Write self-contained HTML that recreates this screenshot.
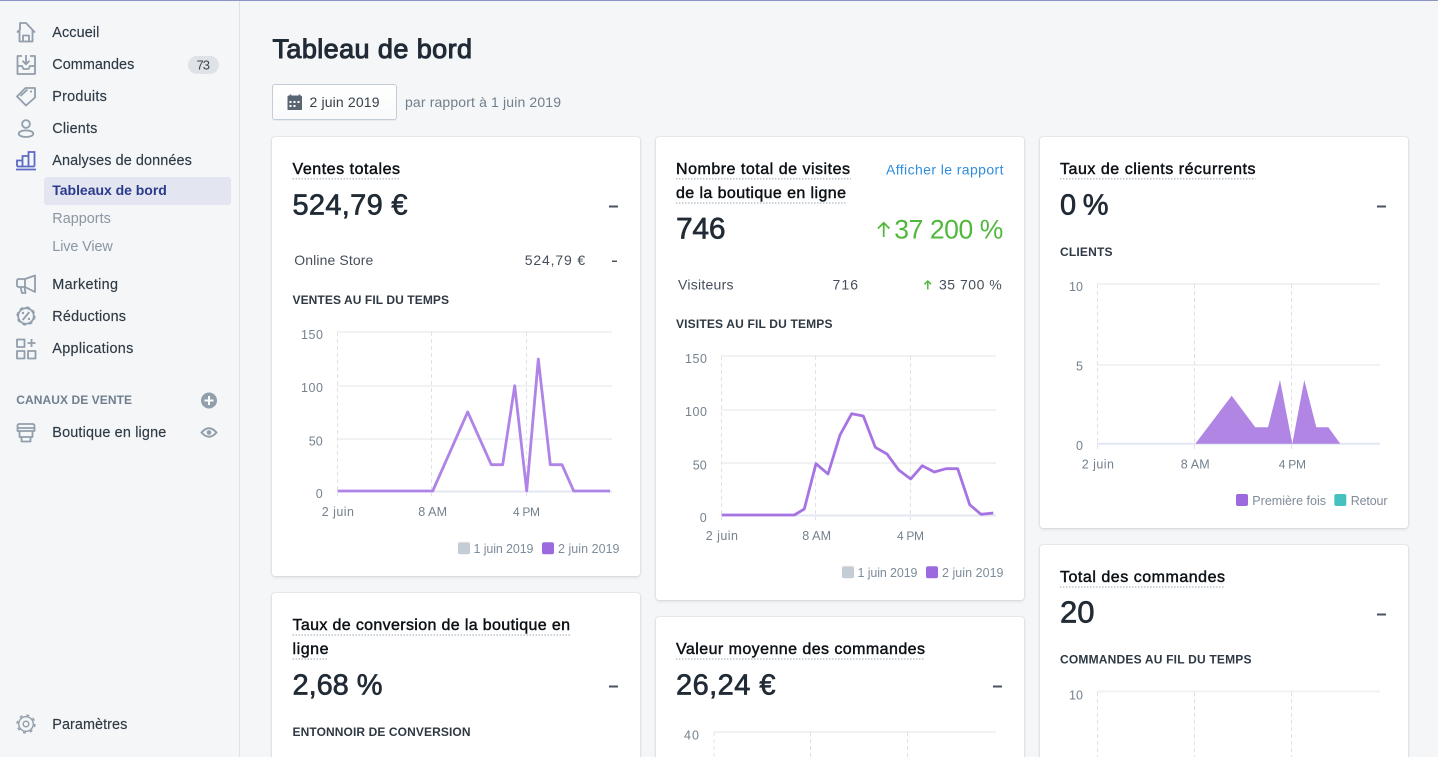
<!DOCTYPE html>
<html lang="fr">
<head>
<meta charset="utf-8">
<title>Tableau de bord</title>
<style>
html,body{margin:0;padding:0;width:1438px;height:757px;overflow:hidden;background:#f4f6f8}
body{position:relative;font-family:"Liberation Sans",sans-serif}
.top{position:absolute;left:0;top:0;width:1438px;height:1px;background:#8f94c6}
.side{position:absolute;left:0;top:0;width:239px;height:757px;border-right:1px solid #dfe3e8;background:#f4f6f8}
.sel{position:absolute;left:44px;top:177px;width:187px;height:28px;background:#e3e5f0;border-radius:3px}
.badge{position:absolute;left:188px;top:56px;width:31px;height:18px;border-radius:9px;background:#dfe3e8}
.btn{position:absolute;left:272px;top:84px;width:123px;height:34px;border:1px solid #c4cdd5;border-radius:3px;background:linear-gradient(#fff,#f9fafb);box-shadow:0 1px 0 rgba(22,29,37,.05)}
.card{position:absolute;width:368px;background:#fff;border-radius:3px;box-shadow:0 0 0 1px rgba(63,63,68,.05),0 1px 3px 0 rgba(63,63,68,.15)}
svg{position:absolute;left:0;top:0}
text{font-family:"Liberation Sans",sans-serif;white-space:pre}
.n{font-size:14.4px;fill:#2f3a45;stroke:#2f3a45;stroke-width:.15}
.s{font-size:14.4px;fill:#8a96a3}
.ti{font-size:16px;fill:#0c1116;stroke:#0c1116;stroke-width:.45;transform:translateY(-.5px)}
.v{font-size:29px;fill:#212b36;stroke:#212b36;stroke-width:.65;transform:translateY(-.5px)}
.r{font-size:14px;fill:#454f5b;transform:translateY(-.5px)}
.h{font-size:12px;font-weight:bold;fill:#2e3944;transform:translateY(-1px)}
.l{font-size:12.5px;fill:#74818e;transform:translateY(-.5px)}
.lg{font-size:12.5px;fill:#7f8c99}
.i{fill:none;stroke:#919eab;stroke-width:1.8;stroke-linejoin:round}
.gr{stroke:#f1f2f4;stroke-width:2}
.ax{stroke:#e3e7f3;stroke-width:2}
.da{stroke:#dfe3e8;stroke-width:1;stroke-dasharray:4 3}
.u{stroke:#b9c3ce;stroke-width:1.5;stroke-dasharray:1.5 1.5}
.d{fill:#4b5560}
</style>
</head>
<body>
<div class="side"></div>
<div class="top"></div>
<div class="sel"></div>
<div class="badge"></div>
<div class="btn"></div>
<div class="card" style="left:272px;top:137px;height:439px"></div>
<div class="card" style="left:272px;top:593px;height:180px"></div>
<div class="card" style="left:656px;top:137px;height:463px"></div>
<div class="card" style="left:656px;top:617px;height:160px"></div>
<div class="card" style="left:1040px;top:137px;height:391px"></div>
<div class="card" style="left:1040px;top:545px;height:230px"></div>

<svg width="1438" height="757" viewBox="0 0 1438 757" xmlns="http://www.w3.org/2000/svg">
<!-- sidebar icons -->
<path class="i" d="M17 32.500l3-3V23h6l9 9.500M19.500 31v10.500h13V30M23 41.500v-6h6v6"/>
<path class="i" d="M22 56h-4.500v18h17.500V56h-5M17.500 66h4.500l1.500 3h5l1.500-3h5M26 55v9M22.500 60.800l3.500 3.500 3.500-3.500"/>
<path class="i" d="M25.500 88H35v9.500L26 105.500 17 96.500zM20.500 96l7-6.500"/>
<circle cx="31" cy="91.500" r="1.100" fill="#919eab"/>
<circle class="i" cx="26" cy="124" r="3.900"/>
<ellipse class="i" cx="26" cy="133.700" rx="7.300" ry="3.300"/>
<path d="M17 166.500v-6h5.500M22.500 166.500v-10.500h6v10.500M28.500 166.500V152h6v14.500M17 166.500h17.500" fill="none" stroke="#5c6ac4" stroke-width="1.800"/>
<path d="M16 169.500h20" stroke="#5c6ac4" stroke-width="1.800"/>
<path class="i" d="M35 275.500V292l-10-5h-6q-2 0-2-2v-4q0-2 2-2h6zM25 279v8M20.500 287l1.500 6h3.500l-1-6"/>
<circle class="i" cx="26" cy="316" r="7.800"/>
<circle cx="26" cy="316" r="8.800" fill="none" stroke="#919eab" stroke-width="1.600" stroke-dasharray="3.500 3.410"/>
<path class="i" d="M22.700 320l6.600-8" stroke-width="1.500"/>
<circle cx="23" cy="313" r="1.200" fill="#919eab"/><circle cx="29" cy="319" r="1.200" fill="#919eab"/>
<path class="i" d="M17 339.500h7.500v7.500H17zM17 351h7.500v7.500H17zM28 351h7.500v7.500H28zM31.500 339v8M27.500 343h8"/>
<path class="i" d="M17.500 431v-5q0-2 2-2h13q2 0 2 2v5zM17.500 428h17M19.500 431v6h13v-6M21.500 437v4.500h9V437"/>
<circle cx="26" cy="724" r="7.300" fill="none" stroke="#919eab" stroke-width="1.400"/>
<circle cx="26" cy="724" r="8.900" fill="none" stroke="#919eab" stroke-width="1.500" stroke-dasharray="3 4"/>
<circle cx="26" cy="724" r="2.800" fill="none" stroke="#919eab" stroke-width="1.500"/>
<circle cx="209" cy="400.500" r="8" fill="#919eab"/>
<path d="M209 396v9M204.500 400.500h9" stroke="#fff" stroke-width="2"/>
<path d="M201.500 432.500q7.500-8.500 15 0q-7.500 8.500-15 0z" fill="none" stroke="#919eab" stroke-width="1.900"/>
<circle cx="209" cy="432.500" r="2.300" fill="#919eab"/>

<!-- sidebar text -->
<text class="n" x="52.300" y="37" textLength="47">Accueil</text>
<text class="n" x="52.300" y="69" textLength="82">Commandes</text>
<text x="196.500" y="69.500" font-size="13" fill="#3c4650" textLength="13.500">73</text>
<text class="n" x="52.300" y="101" textLength="54.500">Produits</text>
<text class="n" x="52.300" y="133" textLength="45">Clients</text>
<text class="n" x="52.300" y="165" textLength="139.500">Analyses de données</text>
<text x="52.300" y="195" font-size="14" font-weight="bold" fill="#2b3a8c" textLength="114.500">Tableaux de bord</text>
<text class="s" x="52.300" y="223" textLength="58.500">Rapports</text>
<text class="s" x="52.300" y="251" textLength="60.500">Live View</text>
<text class="n" x="52.300" y="289" textLength="65.700">Marketing</text>
<text class="n" x="52.300" y="321" textLength="73.700">Réductions</text>
<text class="n" x="52.300" y="353" textLength="81">Applications</text>
<text x="16.300" y="404" font-size="12" font-weight="bold" fill="#6f7f8e" textLength="115.700">CANAUX DE VENTE</text>
<text class="n" x="52.300" y="437" textLength="114">Boutique en ligne</text>
<text class="n" x="52.300" y="729" textLength="75">Paramètres</text>

<!-- header -->
<text x="272.500" y="58" font-size="27" fill="#212b36" stroke="#212b36" stroke-width="1" textLength="199.500">Tableau de bord</text>
<path d="M287.500 97q0-1.500 1.500-1.500h11q2 0 2 1.500v12.500q0 .5-.5.5h-13.500q-.5 0-.5-.5z" fill="#5a6572"/>
<path d="M290.500 94.500v2M299.500 94.500v2" stroke="#5a6572" stroke-width="1.600"/>
<path d="M289.500 101h2v2h-2zM293.500 101h2v2h-2zM297.500 101h2v2h-2zM289.500 105h2v2h-2zM293.500 105h2v2h-2z" fill="#fff"/>
<text x="309.500" y="107" font-size="14" fill="#36404a" textLength="70">2 juin 2019</text>
<text x="405" y="107" font-size="14" fill="#717e8b" textLength="156">par rapport à 1 juin 2019</text>

<!-- card 1 -->
<text class="ti" x="292.500" y="174.300" textLength="107.500">Ventes totales</text>
<path class="u" d="M292.500 178.800H400"/>
<text class="v" x="292.500" y="215" textLength="115">524,79 €</text>
<rect class="d" x="609" y="205.500" width="9" height="2"/>
<text class="r" x="294.300" y="265.700" textLength="79">Online Store</text>
<text class="r" x="524.700" y="265.700" textLength="60.500">524,79 €</text>
<rect class="d" x="612" y="260.500" width="5" height="1.500"/>
<text class="h" x="292.500" y="305" textLength="156.500">VENTES AU FIL DU TEMPS</text>
<g>
<path class="gr" d="M337 332H612M337 386H612M337 439H612"/>
<path class="da" d="M337.500 332V496M431.500 332V496M526.500 332V496"/>
<path class="ax" d="M337 491.500H612"/>
<path d="M337.700 491H432.700L467.700 412L491.300 464.700H502.700L514.700 385.700L526.700 491L538.300 359L550.300 464.700H562L573.700 491H610" fill="none" stroke="#b083e6" stroke-width="2.800" stroke-linejoin="round"/>
<text class="l" x="301" y="339.500" textLength="22">150</text>
<text class="l" x="301" y="392.500" textLength="22">100</text>
<text class="l" x="308.700" y="446" textLength="14">50</text>
<text class="l" x="315.700" y="498.500" textLength="7">0</text>
<text class="l" x="321.700" y="516.500" textLength="32.300">2 juin</text>
<text class="l" x="418.300" y="516.500" textLength="28.700">8 AM</text>
<text class="l" x="513" y="516.500" style="font-size:12px" textLength="27">4 PM</text>
<rect x="458" y="542.300" width="12" height="12" rx="2" fill="#c4cdd5"/>
<text class="lg" x="473.500" y="553" textLength="60">1 juin 2019</text>
<rect x="542" y="542.300" width="12" height="12" rx="2" fill="#9c6ade"/>
<text class="lg" x="558" y="553" textLength="61.500">2 juin 2019</text>
</g>

<!-- card 2 -->
<text class="ti" x="676" y="174.300" textLength="174">Nombre total de visites</text>
<path class="u" d="M676 178.800H851"/>
<text class="ti" x="676" y="198.500" textLength="170">de la boutique en ligne</text>
<path class="u" d="M676 203H846"/>
<text x="886" y="174.300" font-size="14" fill="#2f8ddc" textLength="117.500">Afficher le rapport</text>
<text class="v" x="676" y="239" style="font-size:30px" textLength="49.500">746</text>
<path d="M883.700 237V223M878 228.500l5.700-5.700 5.700 5.700" fill="none" stroke="#50b83c" stroke-width="1.800"/>
<text x="894.300" y="238.500" font-size="26.500" fill="#50b83c" textLength="109">37 200 %</text>
<text class="r" x="678" y="290" textLength="55.500">Visiteurs</text>
<text class="r" x="832.500" y="290" textLength="25.500">716</text>
<path d="M927.800 289.500V281M924.500 284.300l3.300-3.300 3.300 3.300" fill="none" stroke="#50b83c" stroke-width="1.500"/>
<text class="r" x="939" y="290" textLength="62.700">35 700 %</text>
<text class="h" x="676" y="329" textLength="156.500">VISITES AU FIL DU TEMPS</text>
<g>
<path class="gr" d="M721 356H996M721 410H996M721 463H996"/>
<path class="da" d="M721.500 356V520M815.500 356V520M910.500 356V520"/>
<path class="ax" d="M721 515.500H996"/>
<path d="M721.700 515H794.300L804.300 509L816 463.700L828 474L840 435L851.700 413.700L863.300 416L875.300 447.300L887 454L898.700 470L910.700 479L922.300 465.700L934.300 472L946 468.700H957.700L969.700 504.700L981 514.300L993.300 513" fill="none" stroke="#a673e2" stroke-width="2.800" stroke-linejoin="round"/>
<text class="l" x="685" y="363.500" textLength="22">150</text>
<text class="l" x="685" y="416.500" textLength="22">100</text>
<text class="l" x="692.700" y="470" textLength="14">50</text>
<text class="l" x="699.700" y="522.500" textLength="7">0</text>
<text class="l" x="705.700" y="540.500" textLength="32.300">2 juin</text>
<text class="l" x="802.300" y="540.500" textLength="28.700">8 AM</text>
<text class="l" x="897" y="540.500" style="font-size:12px" textLength="27">4 PM</text>
<rect x="842" y="566.300" width="12" height="12" rx="2" fill="#c4cdd5"/>
<text class="lg" x="857.500" y="577" textLength="60">1 juin 2019</text>
<rect x="926" y="566.300" width="12" height="12" rx="2" fill="#9c6ade"/>
<text class="lg" x="942" y="577" textLength="61.500">2 juin 2019</text>
</g>

<!-- card 3 -->
<text class="ti" x="1060" y="174.300" textLength="195.500">Taux de clients récurrents</text>
<path class="u" d="M1060 178.800H1255.500"/>
<text class="v" x="1060" y="215" textLength="48.500">0 %</text>
<rect class="d" x="1377" y="205.500" width="9" height="2"/>
<text class="h" x="1060" y="257" textLength="52.500">CLIENTS</text>
<g>
<path class="gr" d="M1097 284H1380M1097 365H1380"/>
<path class="da" d="M1097.500 284V449M1194.500 284V449M1291.500 284V449"/>
<path class="ax" d="M1097 443.700H1380"/>
<path d="M1195.300 443.700L1231.700 395.700L1255.300 427.300H1268L1280 380L1292.300 443.700L1304.300 380L1316.300 427.300H1328.300L1340.300 443.700Z" fill="#b085e4"/>
<text class="l" x="1069" y="291.500" textLength="14">10</text>
<text class="l" x="1076" y="371" textLength="7">5</text>
<text class="l" x="1076" y="450.500" textLength="7">0</text>
<text class="l" x="1081.700" y="469" textLength="32.300">2 juin</text>
<text class="l" x="1180.700" y="469" textLength="29">8 AM</text>
<text class="l" x="1278.700" y="469" style="font-size:12px" textLength="27.300">4 PM</text>
<rect x="1236" y="494" width="12" height="12" rx="2" fill="#9c6ade"/>
<text class="lg" x="1252.300" y="505" textLength="73.700">Première fois</text>
<rect x="1334.300" y="494" width="12" height="12" rx="2" fill="#47c1bf"/>
<text class="lg" x="1350.700" y="505" textLength="36.800">Retour</text>
</g>

<!-- card 4 -->
<text class="ti" x="1060" y="582.500" textLength="165">Total des commandes</text>
<path class="u" d="M1060 587H1225"/>
<text class="v" x="1060" y="623" style="font-size:31px" textLength="34.500">20</text>
<rect class="d" x="1377" y="613.500" width="9" height="2"/>
<text class="h" x="1060" y="664.500" textLength="191.500">COMMANDES AU FIL DU TEMPS</text>
<path class="gr" d="M1097 691.500H1380"/>
<path class="da" d="M1097.500 692V757M1194.500 692V757M1291.500 692V757"/>
<text class="l" x="1069" y="700" textLength="14">10</text>

<!-- card 5 -->
<text class="ti" x="676" y="654.500" textLength="249">Valeur moyenne des commandes</text>
<path class="u" d="M676 659H925"/>
<text class="v" x="676" y="695" textLength="99.500">26,24 €</text>
<rect class="d" x="993" y="685.500" width="9" height="2"/>
<path class="gr" d="M714 732H996"/>
<path class="da" d="M714 732V757M810.500 732V757M907.500 732V757"/>
<text class="l" x="684" y="740" textLength="15">40</text>

<!-- card 6 -->
<text class="ti" x="292.500" y="630.500" textLength="277.500">Taux de conversion de la boutique en</text>
<path class="u" d="M292.500 635H570.500"/>
<text class="ti" x="292.500" y="654.500" textLength="36">ligne</text>
<path class="u" d="M292.500 659H328.500"/>
<text class="v" x="292.500" y="695" textLength="90">2,68 %</text>
<rect class="d" x="609" y="685.500" width="9" height="2"/>
<text class="h" x="292.500" y="737" textLength="178">ENTONNOIR DE CONVERSION</text>
</svg>
</body>
</html>
